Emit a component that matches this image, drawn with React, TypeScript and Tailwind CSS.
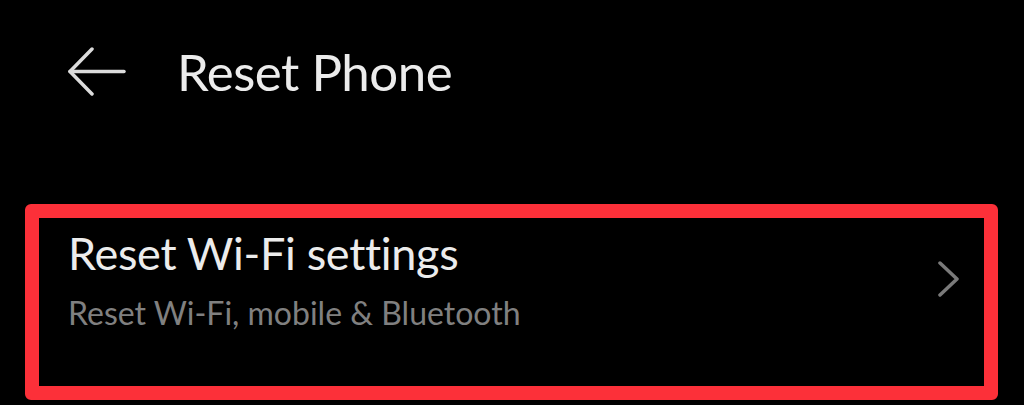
import React from 'react';

const BackArrow = () => (
  <svg width="60" height="50" viewBox="0 0 60 50" fill="none" stroke="#dcdcdc" strokeWidth="3.5" strokeLinecap="round" strokeLinejoin="round">
    <path d="M57 24.5H3" />
    <path d="M25 2L3 24.5L25 47" />
  </svg>
);

const Chevron = () => (
  <svg width="22" height="36" viewBox="0 0 22 36" fill="none" stroke="#7a7a7a" strokeWidth="3.5" strokeLinecap="round" strokeLinejoin="round">
    <path d="M2 2L19 18L2 34" />
  </svg>
);

export default function App() {
  return (
    <div className="w-[1024px] h-[405px] bg-black overflow-hidden font-['Lato',sans-serif]">
      {/* top bar */}
      <div className="flex items-center h-[145px] pl-[67px] pb-[2px]">
        <BackArrow />
        <h1 className="ml-[50px] text-[51px] text-[#ececec] leading-none tracking-[-0.5px]">Reset Phone</h1>
      </div>

      {/* highlighted row */}
      <div className="mt-[59px] ml-[25px] mr-[26px] h-[196px] border-[14px] border-[#fc3039] rounded-[6px] flex items-start">
        <div className="flex-1 pl-[29px] pt-[7px]">
          <div className="text-[45px] text-[#ececec] leading-[56px] tracking-[-0.3px]">Reset Wi-Fi settings</div>
          <div className="text-[32px] text-[#808080] leading-[40px] mt-[12px]">Reset Wi-Fi, mobile &amp; Bluetooth</div>
        </div>
        <div className="pr-[24px] pt-[43px]">
          <Chevron />
        </div>
      </div>
    </div>
  );
}
